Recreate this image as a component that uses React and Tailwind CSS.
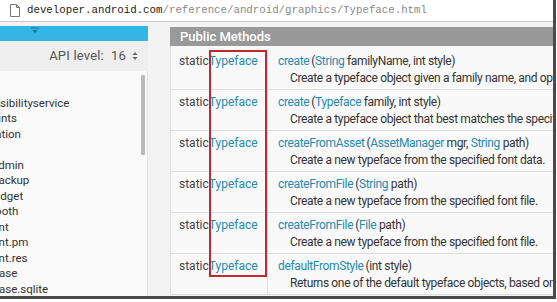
import React from "react";

const rows = [
  {
    name: "create",
    args: [["String", true], [" familyName, int style", false]],
    desc: "Create a typeface object given a family name, and option style information.",
  },
  {
    name: "create",
    args: [["Typeface", true], [" family, int style", false]],
    desc: "Create a typeface object that best matches the specified existing typeface and the specified Style.",
  },
  {
    name: "createFromAsset",
    args: [["AssetManager", true], [" mgr, ", false], ["String", true], [" path", false]],
    desc: "Create a new typeface from the specified font data.",
  },
  {
    name: "createFromFile",
    args: [["String", true], [" path", false]],
    desc: "Create a new typeface from the specified font file.",
  },
  {
    name: "createFromFile",
    args: [["File", true], [" path", false]],
    desc: "Create a new typeface from the specified font file.",
  },
  {
    name: "defaultFromStyle",
    args: [["int style", false]],
    desc: "Returns one of the default typeface objects, based on the specified style",
  },
];

const packages = [
  "android",
  "android.accessibilityservice",
  "android.accounts",
  "android.animation",
  "android.app",
  "android.app.admin",
  "android.app.backup",
  "android.appwidget",
  "android.bluetooth",
  "android.content",
  "android.content.pm",
  "android.content.res",
  "android.database",
  "android.database.sqlite",
];

function PageIcon() {
  return (
    <svg width="10" height="13" viewBox="0 0 10 13" className="shrink-0">
      <path d="M0.5 0.5 H6.5 L9.5 3.5 V12.5 H0.5 Z" fill="#fff" stroke="#777" />
      <path d="M6.5 0.5 V3.5 H9.5" fill="none" stroke="#777" />
    </svg>
  );
}

export default function App() {
  return (
    <div className="w-[557px] h-[302px] bg-white overflow-hidden" style={{ fontFamily: "Roboto, 'Liberation Sans', sans-serif" }}>
      <div className="w-[556px] h-[299px] border-r-[3px] border-b-[3px] border-[#4a4a4a]">
        <div className="w-[553px] h-[296px] overflow-hidden bg-[#f3f3f3] relative">
          {/* address bar */}
          <div className="h-[22px] bg-white border-b border-[#c8c8c8] flex items-center pl-[10px] gap-[7px]">
            <PageIcon />
            <div className="text-[10.75px] whitespace-nowrap" style={{ fontFamily: "'Liberation Mono', monospace" }}>
              <span className="text-[#222]">developer.android.com</span>
              <span className="text-[#8a8a8a]">/reference/android/graphics/Typeface.html</span>
            </div>
          </div>

          <div className="flex h-[274px]">
            {/* left nav */}
            <div className="w-[148px] shrink-0 flex flex-col pt-[4px]">
              <div className="h-[15px] bg-[#33b5e5] flex justify-center pr-[78px]">
                <svg width="8" height="8" viewBox="0 0 8 8" className="mt-[1px]">
                  <path d="M0 1 H8" stroke="#1d6f8f" strokeWidth="1" />
                  <path d="M1.5 3 H6.5 L4 6 Z" fill="#1d6f8f" />
                </svg>
              </div>
              <div className="h-[30px] bg-[#eeeeee] flex items-center justify-end pr-[10px] text-[13px] tracking-[0.2px] text-[#555]">
                API level:<span className="ml-[7px]">16</span>
                <svg width="6" height="10" viewBox="0 0 6 10" className="ml-[6px]">
                  <path d="M0.5 4 L3 1 L5.5 4 Z" fill="#666" />
                  <path d="M0.5 6 L3 9 L5.5 6 Z" fill="#666" />
                </svg>
              </div>
              <div className="flex-1 bg-[#fafafa] border-r border-[#e2e2e2] flex overflow-hidden">
                <div className="flex-1 overflow-hidden pt-[9px]">
                  {packages.map((p) => (
                    <div key={p} className="ml-[-72px] whitespace-nowrap text-[11.5px] leading-[15.5px] text-[#333]">
                      {p}
                    </div>
                  ))}
                </div>
                <div className="w-[4px] mr-[2px] mt-[4px] h-[80px] bg-[#b9b9b9] rounded-[1px]" />
              </div>
            </div>

            {/* content */}
            <div className="flex-1 pl-[22px] pt-[5px]">
              <div className="h-[19px] bg-[#999999] text-white text-[13px] font-medium flex items-center pl-[10px]">
                Public Methods
              </div>
              <div className="bg-[#f9f9f9] border-l border-[#e0e0e0] pt-[3px]">
                {rows.map((r, i) => (
                  <div key={i} className="flex border-b border-[#dddddd] h-[41px]">
                    <div className="w-[97px] shrink-0 border-r border-[#dddddd] pl-[8px] pt-[4px] text-[12px] leading-[17px] whitespace-nowrap">
                      <span className="text-[#444]">static</span>
                      <span className="text-[#258aaf]">Typeface</span>
                    </div>
                    <div className="flex-1 min-w-0 pl-[10px] pt-[4px] text-[12px] tracking-[-0.35px] leading-[17px] whitespace-nowrap overflow-hidden">
                      <div>
                        <span className="text-[#258aaf] mr-[2px]">{r.name}</span>
                        <span className="text-[#333]">(</span>
                        {r.args.map(([t, link], j) => (
                          <span key={j} className={link ? "text-[#258aaf]" : "text-[#333]"}>
                            {t}
                          </span>
                        ))}
                        <span className="text-[#333]">)</span>
                      </div>
                      <div className="pl-[12px] text-[#333]">{r.desc}</div>
                    </div>
                  </div>
                ))}
              </div>
            </div>
          </div>

          {/* red annotation box */}
          <div className="absolute left-[209px] top-[50px] w-[58px] h-[227px] border-2 border-[#c3282f] pointer-events-none" />
        </div>
      </div>
    </div>
  );
}
